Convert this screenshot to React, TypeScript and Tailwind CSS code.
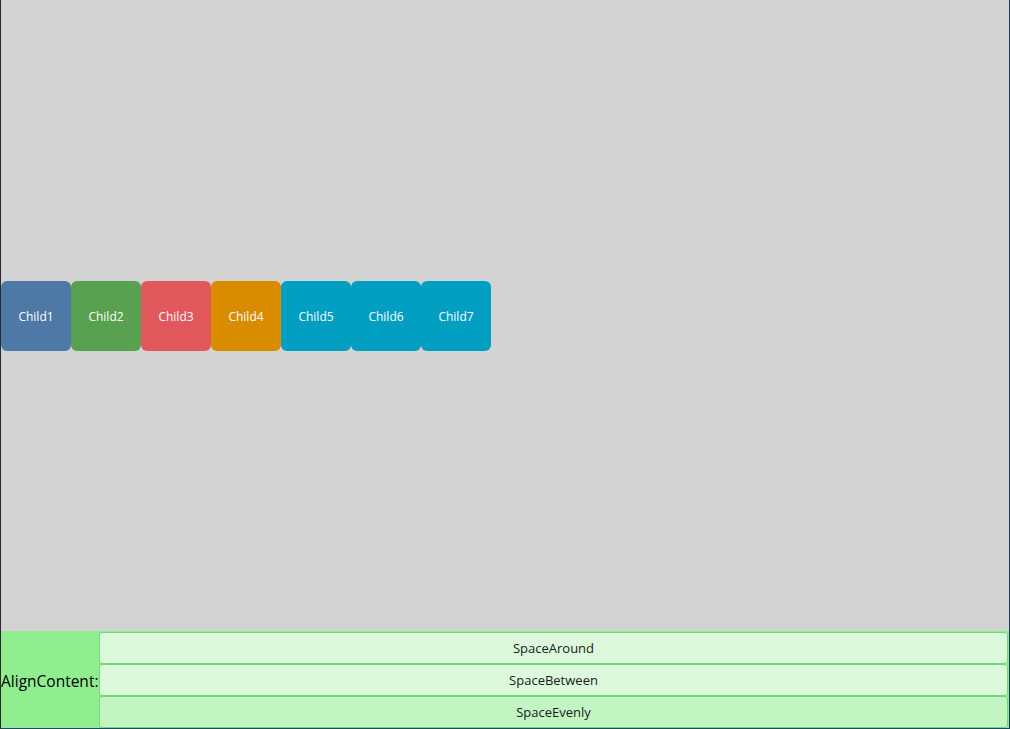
const children = [
  { name: 'Child1', color: 'bg-[#4e78a6]' },
  { name: 'Child2', color: 'bg-[#58a150]' },
  { name: 'Child3', color: 'bg-[#e0585b]' },
  { name: 'Child4', color: 'bg-[#d98c00]' },
  { name: 'Child5', color: 'bg-[#009ec1]' },
  { name: 'Child6', color: 'bg-[#009ec1]' },
  { name: 'Child7', color: 'bg-[#009ec1]' },
];

const options = [
  { label: 'SpaceAround', active: false },
  { label: 'SpaceBetween', active: false },
  { label: 'SpaceEvenly', active: true },
];

export default function App() {
  return (
    <div
      className="flex h-[729px] w-[1010px] flex-col border-r border-b border-l border-r-[#1f3b63] border-b-[#1f4a63] border-l-[#2a2a2a] bg-[#d3d3d3]"
      style={{ fontFamily: '"Open Sans", "Noto Sans", sans-serif' }}
    >
      <div className="flex h-[631px] items-center">
        {children.map((c) => (
          <div
            key={c.name}
            className={`flex h-[70px] w-[70px] items-center justify-center rounded-[6px] pt-[2px] text-[12px] text-white ${c.color}`}
          >
            {c.name}
          </div>
        ))}
      </div>
      <div className="flex flex-1 bg-[#90ee90]">
        <div className="flex w-[98px] items-center pt-[5px] text-[15.5px] text-black">AlignContent:</div>
        <div className="mr-px flex flex-1 flex-col pt-px">
          {options.map((o) => (
            <div
              key={o.label}
              className={`flex h-[32px] items-center justify-center rounded-[3px] border border-[#74d874] pt-[2px] text-[13px] text-[#1a1a1a] ${
                o.active ? 'bg-[#c3f5c3]' : 'bg-[#dcf9dc]'
              }`}
            >
              {o.label}
            </div>
          ))}
        </div>
      </div>
    </div>
  );
}
